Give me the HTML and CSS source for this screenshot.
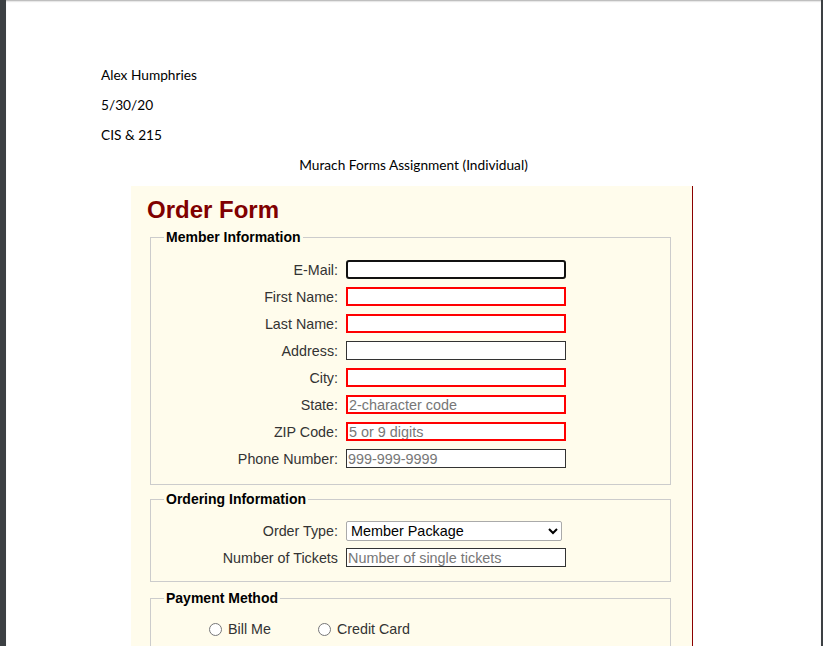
FILE: index.html
```html
<!DOCTYPE html>
<html>
<head>
<meta charset="utf-8">
<link rel="stylesheet" href="styles.css">
</head>
<body>
<div class="viewer">
  <div class="page">
    <div class="doc">
      <p class="line">Alex Humphries</p>
      <p class="line">5/30/20</p>
      <p class="line">CIS &amp; 215</p>
      <p class="line center">Murach Forms Assignment (Individual)</p>
    </div>
    <div class="panel">
      <h1 class="title">Order Form</h1>
      <fieldset class="group member">
        <legend class="legend">Member Information</legend>
        <div class="rows">
          <label class="lbl">E-Mail:</label><input class="field focus" type="text">
          <label class="lbl">First Name:</label><input class="field req" type="text">
          <label class="lbl">Last Name:</label><input class="field req" type="text">
          <label class="lbl">Address:</label><input class="field plain" type="text">
          <label class="lbl">City:</label><input class="field req" type="text">
          <label class="lbl">State:</label><input class="field req" type="text" placeholder="2-character code">
          <label class="lbl">ZIP Code:</label><input class="field req" type="text" placeholder="5 or 9 digits">
          <label class="lbl">Phone Number:</label><input class="field plain" type="text" placeholder="999-999-9999">
        </div>
      </fieldset>
      <fieldset class="group ordering">
        <legend class="legend">Ordering Information</legend>
        <div class="rows">
          <label class="lbl">Order Type:</label>
          <select class="picker"><option>Member Package</option></select>
          <label class="lbl">Number of Tickets</label><input class="field plain" type="text" placeholder="Number of single tickets">
        </div>
      </fieldset>
      <fieldset class="group payment">
        <legend class="legend">Payment Method</legend>
        <div class="radios">
          <label class="opt"><input type="radio" name="pay" class="radio">Bill Me</label>
          <label class="opt"><input type="radio" name="pay" class="radio">Credit Card</label>
        </div>
      </fieldset>
    </div>
  </div>
</div>
</body>
</html>
```
FILE: styles.css
```css
html, body {
  margin: 0;
  padding: 0;
  height: 100%;
  overflow: hidden;
}
.viewer {
  height: 646px;
  border-left: 6px solid #3c4043;
  border-right: 2px solid #3c4043;
  background: #ffffff;
  box-shadow: inset 0 2px 2px -1px #a8a8a8;
}
.page {
  padding-top: 60px;
}
.doc {
  padding-left: 95px;
  font-family: Lato, "Open Sans", sans-serif;
  font-size: 13.7px;
  color: #000;
}
.line {
  margin: 0;
  line-height: 30px;
}
.center {
  text-align: center;
  padding-right: 95px;
}
.panel {
  width: 524px;
  margin: 6px 0 0 125px;
  padding: 10px 21px 0 16px;
  background: #fffcec;
  border-right: 1px solid #8b0000;
  height: 500px;
  font-family: "Liberation Sans", Arial, sans-serif;
}
.title {
  margin: 0;
  font-size: 24px;
  line-height: 28px;
  color: #800000;
  font-weight: bold;
}
.group {
  margin: 5px 0 0 3px;
  padding: 15px 13px 16px 13px;
  border: 1px solid #cccccc;
  min-width: 0;
}
.legend {
  padding: 0 2px;
  font-weight: bold;
  font-size: 14px;
  color: #000;
}
.rows {
  display: grid;
  grid-template-columns: 174px 220px;
  column-gap: 8px;
  row-gap: 8px;
  align-items: center;
}
.lbl {
  text-align: right;
  font-size: 14.3px;
  color: #333;
}
.field {
  box-sizing: border-box;
  width: 220px;
  height: 19px;
  margin: 0;
  padding: 0 1px;
  font-family: "Liberation Sans", Arial, sans-serif;
  font-size: 14.4px;
  background: #fff;
  border: 1px solid #333;
}
.field::placeholder {
  color: #777;
}
.req {
  border: 2px solid #ff0000;
}
.focus {
  border: 2px solid #111;
  border-radius: 3px;
}
.plain {
  border: 1px solid #333;
}
.ordering {
  margin-top: 6px;
  padding-top: 14px;
  padding-bottom: 14px;
}
.ordering .rows {
  row-gap: 7px;
}
.picker {
  box-sizing: border-box;
  width: 216px;
  height: 20px;
  margin: 0;
  font-family: "Liberation Sans", Arial, sans-serif;
  font-size: 14.4px;
  background: #fff;
  color: #000;
  border: 1px solid #aaa;
  border-radius: 2px;
}
.payment {
  margin-top: 8px;
  padding-top: 15px;
  padding-bottom: 40px;
}
.radios {
  display: flex;
  gap: 47px;
  padding-left: 45px;
}
.opt {
  font-size: 14.3px;
  color: #333;
  display: flex;
  align-items: center;
}
.radio {
  margin: 0 6px 0 0;
  width: 13px;
  height: 13px;
}
```
